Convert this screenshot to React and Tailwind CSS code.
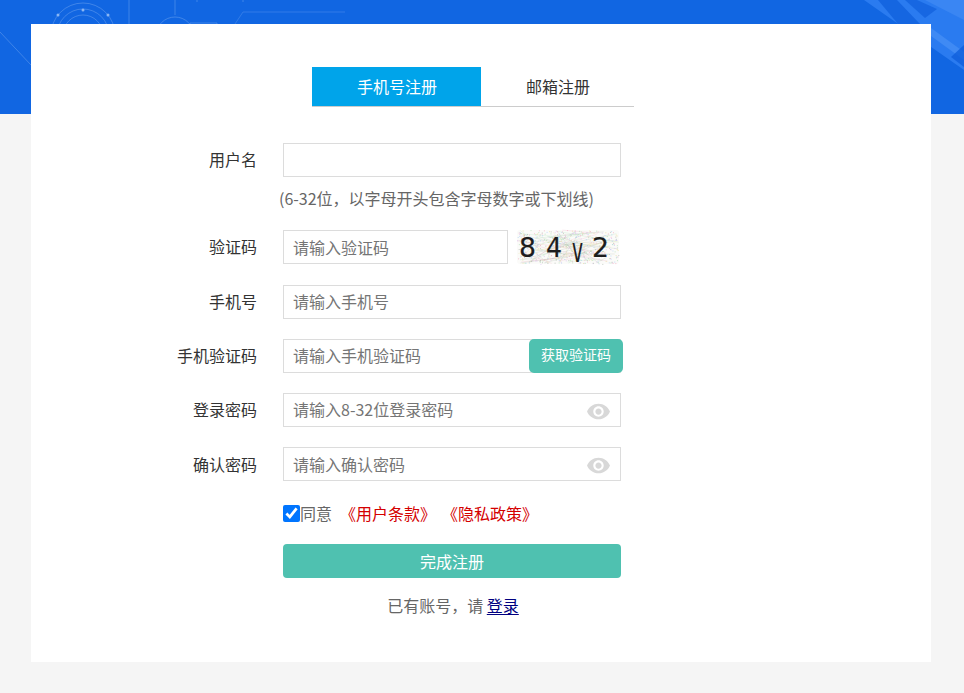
import React from "react";
import { MdVisibility } from "react-icons/md";

const FONT = "font-['Microsoft_YaHei','Noto_Sans_CJK_SC','Noto_Sans',sans-serif]";

function HeaderArt() {
  return (
    <svg className="block h-full w-full" viewBox="0 0 964 114" preserveAspectRatio="none">
      <g fill="none" stroke="#6ea3f0" strokeOpacity="0.5" strokeWidth="1">
        <circle cx="83" cy="35" r="32" />
        <circle cx="83" cy="35" r="26" />
        <circle cx="83" cy="35" r="20" />
        <line x1="129" y1="0" x2="129" y2="24" />
        <line x1="175" y1="0" x2="175" y2="15" />
        <circle cx="175" cy="36" r="19" />
        <path d="M190 24 L190 23 L217 23 L217 24" />
        <line x1="0" y1="32" x2="31" y2="65" />
        <path d="M235 24 L243 12 L345 12" strokeOpacity="0.35" />
        <path d="M197 0 L197 2 M243 0 L243 2" />
      </g>
      <circle cx="58" cy="15" r="1.5" fill="#8ab6f3" />
      <circle cx="108" cy="15" r="1.5" fill="#8ab6f3" />
      <circle cx="83" cy="10" r="1.5" fill="#8ab6f3" />
      <g>
        <polygon points="864,0 964,0 964,70" fill="#2a7bf0" />
        <polygon points="878,0 897,0 920,24 898,24" fill="#0f5fdc" fillOpacity="0.75" />
        <polygon points="905,0 917,0 937,9 925,18" fill="#0f5fdc" fillOpacity="0.7" />
        <polygon points="925,0 964,0 964,20" fill="#3a86f3" />
        <polygon points="931,28 964,52 964,60 931,36" fill="#3f8af4" />
        <polygon points="951,57 964,45 964,67" fill="#0f5fdc" fillOpacity="0.8" />
      </g>
    </svg>
  );
}

function Captcha() {
  const lines = [];
  const cols = ["#f2a8c0", "#a8cdf5", "#a9e0b0", "#d8b8ee", "#e8dd9a", "#a9b5a9"];
  let s = 17;
  const r = (n) => {
    s = (s * 9301 + 49297) % 233280;
    return (s / 233280) * n;
  };
  for (let i = 0; i < 60; i++) {
    lines.push(
      <line key={i} x1={r(102)} y1={r(34)} x2={r(102)} y2={r(34)} stroke={i % 2 ? "#a9b5a9" : cols[i % 6]} strokeWidth="0.4" strokeOpacity="0.55" />
    );
  }
  const dots = [];
  for (let i = 0; i < 420; i++) {
    dots.push(<rect key={i} x={r(102)} y={r(34)} width="1" height="1" fill={cols[i % 6]} fillOpacity="0.65" />);
  }
  return (
    <svg className="ml-[9px] block h-[34px] w-[102px] overflow-visible rounded-[3px] bg-[#fbfbf9]" viewBox="0 0 102 34">
      {lines}
      {dots}
      <g fill="#1d1d1d" fontFamily="'DejaVu Sans',sans-serif" fontSize="26" stroke="#1d1d1d" strokeWidth="0.2">
        <text x="2" y="27" textLength="17" lengthAdjust="spacingAndGlyphs">8</text>
        <text x="29" y="27" textLength="16" lengthAdjust="spacingAndGlyphs">4</text>
        <text x="55" y="32" fontSize="34" textLength="11" lengthAdjust="spacingAndGlyphs">v</text>
        <text x="75" y="27" textLength="17" lengthAdjust="spacingAndGlyphs">2</text>
      </g>
    </svg>
  );
}

const inputCls =
  "block h-[34px] border border-[#dcdcdc] bg-white pl-[9px] text-[16px] text-[#333] outline-none placeholder:text-[#757575] " + FONT;

function Row({ label, mt, children, labelPad = "pb-[2px]" }) {
  return (
    <div className={"flex items-center " + mt}>
      <label className={"w-[226px] text-right text-[16px] text-[#333] " + labelPad}>{label}</label>
      <div className="relative ml-[26px] flex items-center">{children}</div>
    </div>
  );
}

export default function App() {
  return (
    <div className={"min-h-[693px] bg-[#f5f5f5] " + FONT}>
      <div className="h-[114px] overflow-hidden bg-[#1166e2]">
        <HeaderArt />
      </div>
      <div className="relative ml-[31px] mt-[-90px] h-[638px] w-[900px] bg-white pt-[43px]">
        <div className="ml-[281px] flex h-[40px] w-[322px] border-b border-[#cccccc] text-[16px]">
          <div className="flex h-[39px] w-[169px] items-center justify-center bg-[#00a4ea] pb-[1px] pl-[1px] text-white">手机号注册</div>
          <div className="flex h-[39px] w-[153px] items-center justify-center pb-[1px] pl-[1px] text-[#333]">邮箱注册</div>
        </div>

        <Row label="用户名" mt="mt-[36px]">
          <input className={inputCls + " w-[338px] pb-[1px]"} />
        </Row>
        <div className="ml-[248px] mt-[9px] h-[24px] text-[16px] leading-[24px] text-[#666]">(6-32位，以字母开头包含字母数字或下划线)</div>
        <Row label="验证码" mt="mt-[20px]">
          <input className={inputCls + " w-[225px] pb-[1px]"} placeholder="请输入验证码" />
          <Captcha />
        </Row>
        <Row label="手机号" mt="mt-[21px]">
          <input className={inputCls + " w-[338px] pb-[3px]"} placeholder="请输入手机号" />
        </Row>
        <Row label="手机验证码" mt="mt-[20px]">
          <input className={inputCls + " w-[338px] pb-[3px]"} placeholder="请输入手机验证码" />
          <button className="absolute left-[246px] top-0 h-[34px] w-[94px] rounded-[5px] bg-[#4fc1b0] pb-[3px] text-[14px] text-white">获取验证码</button>
        </Row>
        <Row label="登录密码" mt="mt-[20px]">
          <input className={inputCls + " w-[338px] pb-[3px]"} placeholder="请输入8-32位登录密码" />
          <MdVisibility size={25} className="absolute left-[303px] top-[6px] text-[#d8d8d8]" />
        </Row>
        <Row label="确认密码" mt="mt-[20px]" labelPad="pb-0">
          <input className={inputCls + " w-[338px] pb-[1px]"} placeholder="请输入确认密码" />
          <MdVisibility size={25} className="absolute left-[303px] top-[6px] text-[#d8d8d8]" />
        </Row>

        <div className="ml-[252px] mt-[23px] flex h-[18px] items-center text-[16px] text-[#666]">
          <input type="checkbox" defaultChecked className="m-0 h-[17px] w-[17px] accent-[#0075ff]" />
          <span>同意</span>
          <a className="ml-[8px] text-[#d40000]">《用户条款》</a>
          <a className="ml-[6px] text-[#d40000]">《隐私政策》</a>
        </div>

        <button className="ml-[252px] mt-[22px] block h-[34px] w-[338px] rounded-[4px] bg-[#4fc1b0] text-[16px] text-white">完成注册</button>

        <div className="ml-[252px] mt-[15px] w-[340px] text-center text-[16px] leading-[24px] text-[#666]">
          已有账号，请 <a className="text-[#000080] underline underline-offset-2">登录</a>
        </div>
      </div>
    </div>
  );
}
